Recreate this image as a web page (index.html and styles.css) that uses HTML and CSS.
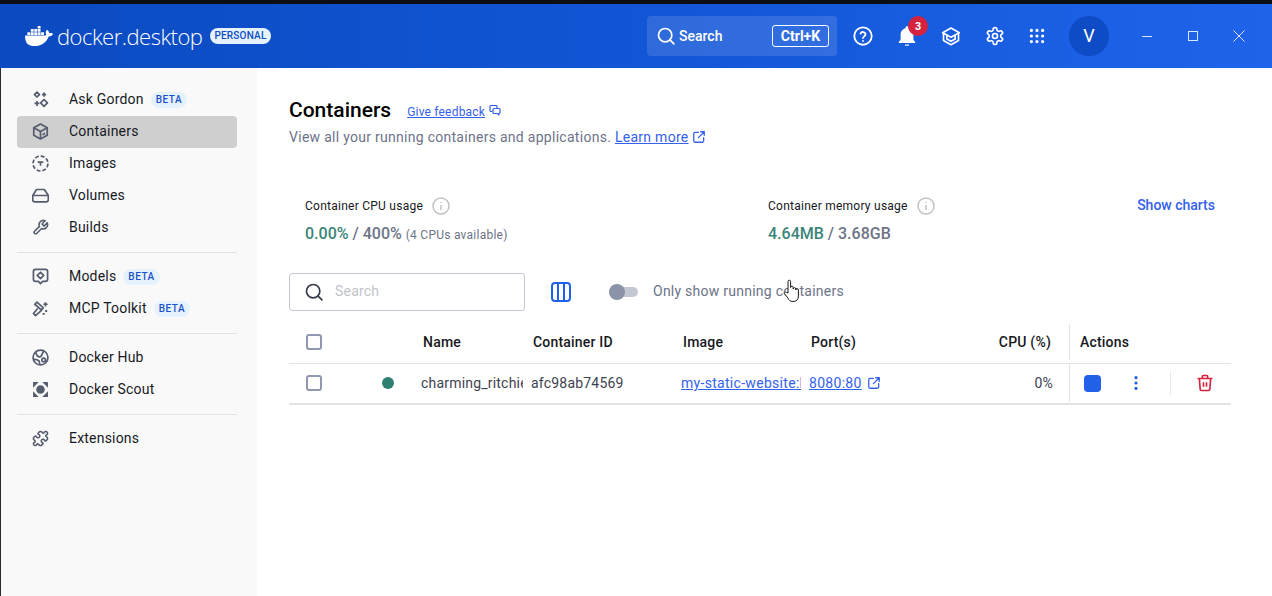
FILE: index.html
```html
<!DOCTYPE html>
<html lang="en">
<head>
    <meta charset="UTF-8">
    <title>Docker Desktop</title>
    <link rel="stylesheet" href="styles.css">
</head>
<body>
    <div class="window">
        <header class="topbar">
            <div class="brand">
                <svg class="whale" viewBox="0 0 24 24" fill="#fff"><path d="M13.983 11.078h2.119a.186.186 0 00.186-.185V9.006a.186.186 0 00-.186-.186h-2.119a.185.185 0 00-.185.185v1.888c0 .102.083.185.185.185m-2.954-5.43h2.118a.186.186 0 00.186-.186V3.574a.186.186 0 00-.186-.185h-2.118a.185.185 0 00-.185.185v1.888c0 .102.082.185.185.186m0 2.716h2.118a.187.187 0 00.186-.186V6.29a.186.186 0 00-.186-.185h-2.118a.185.185 0 00-.185.185v1.887c0 .102.082.185.185.186m-2.93 0h2.12a.186.186 0 00.184-.186V6.29a.185.185 0 00-.185-.185H8.1a.185.185 0 00-.185.185v1.887c0 .102.083.185.185.186m-2.964 0h2.119a.186.186 0 00.185-.186V6.29a.185.185 0 00-.185-.185H5.136a.186.186 0 00-.186.185v1.887c0 .102.084.185.186.186m5.893 2.715h2.118a.186.186 0 00.186-.185V9.006a.186.186 0 00-.186-.186h-2.118a.185.185 0 00-.185.185v1.888c0 .102.082.185.185.185m-2.93 0h2.12a.185.185 0 00.184-.185V9.006a.185.185 0 00-.184-.186h-2.12a.185.185 0 00-.184.185v1.888c0 .102.083.185.185.185m-2.964 0h2.119a.185.185 0 00.185-.185V9.006a.185.185 0 00-.184-.186h-2.12a.186.186 0 00-.186.186v1.887c0 .102.084.185.186.185m-2.92 0h2.12a.185.185 0 00.184-.185V9.006a.185.185 0 00-.184-.186h-2.12a.185.185 0 00-.184.185v1.888c0 .102.082.185.185.185M23.763 9.89c-.065-.051-.672-.51-1.954-.51-.338.001-.676.03-1.01.087-.248-1.7-1.653-2.53-1.716-2.566l-.344-.199-.226.327c-.284.438-.49.922-.612 1.43-.23.97-.09 1.882.403 2.661-.595.332-1.55.413-1.744.42H.751a.751.751 0 00-.75.748 11.376 11.376 0 00.692 4.062c.545 1.428 1.355 2.48 2.41 3.124 1.18.723 3.1 1.137 5.275 1.137.983.003 1.963-.086 2.93-.266a12.248 12.248 0 003.823-1.389c.98-.567 1.86-1.288 2.61-2.136 1.252-1.418 1.998-2.997 2.553-4.4h.221c1.372 0 2.215-.549 2.68-1.009.309-.293.55-.65.707-1.046l.098-.288Z"/></svg>
                <span class="wordmark">docker.desktop</span>
                <span class="plan">PERSONAL</span>
            </div>
            <div class="top-actions">
                <div class="top-search">
                    <svg class="ic-20" viewBox="0 0 24 24" fill="none" stroke="#fff" stroke-width="2" stroke-linecap="round"><circle cx="11" cy="11" r="8"/><path d="M17 17l4.5 4.5"/></svg>
                    <span class="top-search-label">Search</span>
                    <span class="kbd">Ctrl+K</span>
                </div>
                <button class="top-btn">
                    <svg class="ic-22" viewBox="0 0 24 24" fill="none" stroke="#fff" stroke-width="2" stroke-linecap="round"><circle cx="12" cy="12" r="9.5"/><path d="M9.3 9.4a2.8 2.8 0 0 1 5.4.9c0 1.8-2.7 2.3-2.7 4"/><path d="M12 17.3v.1"/></svg>
                </button>
                <button class="top-btn">
                    <svg class="ic-24" viewBox="0 0 24 24" fill="#fff"><path d="M12 2.200c-.8 0-1.400.6-1.400 1.400v.7C7.700 5 5.600 7.600 5.600 10.700v5.200L3.800 17.700v1.300h16.400v-1.300l-1.800-1.800v-5.200c0-3.100-2.100-5.700-5-6.400v-.7c0-.8-.6-1.400-1.400-1.400z"/><path d="M10 20.500h4v1.200h-4z"/></svg>
                    <span class="badge">3</span>
                </button>
                <button class="top-btn">
                    <svg class="ic-20" viewBox="0 0 24 24" fill="none" stroke="#fff" stroke-width="2" stroke-linejoin="round"><path d="M12 2.500L22 8l-10 5.500L2 8z"/><path d="M3 8.500v9l9 5 9-5v-9"/><path d="M7 11.500v4l5 2.800 5-2.800v-4"/></svg>
                </button>
                <button class="top-btn">
                    <svg class="ic-20" viewBox="0 0 24 24" fill="none" stroke="#fff" stroke-width="2" stroke-linejoin="round"><path d="M12.220 2h-.44a2 2 0 0 0-2 2v.18a2 2 0 0 1-1 1.730l-.43.25a2 2 0 0 1-2 0l-.15-.08a2 2 0 0 0-2.730.73l-.22.38a2 2 0 0 0 .73 2.730l.15.1a2 2 0 0 1 1 1.720v.51a2 2 0 0 1-1 1.740l-.15.09a2 2 0 0 0-.73 2.730l.22.38a2 2 0 0 0 2.730.73l.15-.08a2 2 0 0 1 2 0l.43.25a2 2 0 0 1 1 1.730V20a2 2 0 0 0 2 2h.44a2 2 0 0 0 2-2v-.18a2 2 0 0 1 1-1.730l.43-.25a2 2 0 0 1 2 0l.15.08a2 2 0 0 0 2.730-.73l.22-.39a2 2 0 0 0-.73-2.730l-.15-.08a2 2 0 0 1-1-1.740v-.5a2 2 0 0 1 1-1.740l.15-.09a2 2 0 0 0 .73-2.730l-.22-.38a2 2 0 0 0-2.730-.73l-.15.08a2 2 0 0 1-2 0l-.43-.25a2 2 0 0 1-1-1.730V4a2 2 0 0 0-2-2z"/><circle cx="12" cy="12" r="3"/></svg>
                </button>
                <button class="top-btn grid-btn">
                    <svg class="ic-16" viewBox="0 0 20 20" fill="#fff"><circle cx="3" cy="3" r="2"/><circle cx="10" cy="3" r="2"/><circle cx="17" cy="3" r="2"/><circle cx="3" cy="10" r="2"/><circle cx="10" cy="10" r="2"/><circle cx="17" cy="10" r="2"/><circle cx="3" cy="17" r="2"/><circle cx="10" cy="17" r="2"/><circle cx="17" cy="17" r="2"/></svg>
                </button>
                <div class="avatar">V</div>
                <div class="win-controls">
                    <svg class="win-ic" viewBox="0 0 12 12" stroke="#dbe6fb" fill="none"><path d="M1 6.500h10"/></svg>
                    <svg class="win-ic" viewBox="0 0 12 12" stroke="#dbe6fb" fill="none"><rect x="1.500" y="1.500" width="9" height="9"/></svg>
                    <svg class="win-ic" viewBox="0 0 12 12" stroke="#dbe6fb" fill="none"><path d="M.5.500l11 11M11.500.500l-11 11"/></svg>
                </div>
            </div>
        </header>

        <div class="body">
            <nav class="sidebar">
                <a class="nav-item">
                    <svg class="nav-ic" viewBox="0 0 24 24" fill="none" stroke="#555c6e" stroke-width="2.400" stroke-linejoin="round"><path d="M7 1.500l3.500 3.500L7 8.500 3.500 5z"/><path d="M17 12l4.800 4.800L17 21.600l-4.800-4.800z"/><path d="M17 2v6M14 5h6M7 14v7M3.500 17.500h7"/></svg>
                    <span>Ask Gordon</span><span class="beta">BETA</span>
                </a>
                <a class="nav-item active">
                    <svg class="nav-ic" viewBox="0 0 24 24" fill="none" stroke="#555c6e" stroke-width="2.400" stroke-linejoin="round"><path d="M12 1.500l9.500 5.200v10.600L12 22.500l-9.500-5.200V6.700z"/><path d="M2.500 6.700l9.500 5.300 9.500-5.300M12 12v10.500"/><path d="M15 16.500l3.500-2" /></svg>
                    <span>Containers</span>
                </a>
                <a class="nav-item">
                    <svg class="nav-ic" viewBox="0 0 24 24" fill="none" stroke="#555c6e" stroke-width="2.400"><circle cx="12" cy="12" r="10.500" stroke-dasharray="5.500 2.750"/><path d="M8 10h8M12 10v5"/></svg>
                    <span>Images</span>
                </a>
                <a class="nav-item">
                    <svg class="nav-ic" viewBox="0 0 24 24" fill="none" stroke="#555c6e" stroke-width="2.400" stroke-linejoin="round"><path d="M6.500 3.500h11L23 12v6a3 3 0 0 1-3 3H4a3 3 0 0 1-3-3v-6z"/><path d="M1 12h22M14 16.500h.1M18 16.500h.1"/></svg>
                    <span>Volumes</span>
                </a>
                <a class="nav-item">
                    <svg class="nav-ic" viewBox="0 0 24 24" fill="none" stroke="#555c6e" stroke-width="2.200" stroke-linejoin="round"><path d="M14.700 6.300a1 1 0 0 0 0 1.400l1.600 1.600a1 1 0 0 0 1.400 0l3.770-3.770a6 6 0 0 1-7.940 7.940l-6.910 6.910a2.120 2.120 0 0 1-3-3l6.910-6.910a6 6 0 0 1 7.940-7.940l-3.760 3.760z"/></svg>
                    <span>Builds</span>
                </a>
                <div class="nav-sep"></div>
                <a class="nav-item">
                    <svg class="nav-ic" viewBox="0 0 24 24" fill="none" stroke="#555c6e" stroke-width="2.400" stroke-linejoin="round"><path d="M5 2h14a3 3 0 0 1 3 3v11a3 3 0 0 1-3 3h-4l-3 3-3-3H5a3 3 0 0 1-3-3V5a3 3 0 0 1 3-3z"/><path d="M12 6l4.500 4.500L12 15l-4.500-4.500z"/></svg>
                    <span>Models</span><span class="beta">BETA</span>
                </a>
                <a class="nav-item">
                    <svg class="nav-ic" viewBox="0 0 24 24" fill="none" stroke="#555c6e" stroke-width="2.400" stroke-linejoin="round"><path d="M7 3l9 8-3 3-9-8z"/><path d="M14 14l-1 1-8 7-3-3 6-7"/><path d="M19 3v6M16 6h6M20 14v3M18.500 15.500h3M15 19.500h3"/></svg>
                    <span>MCP Toolkit</span><span class="beta">BETA</span>
                </a>
                <div class="nav-sep"></div>
                <a class="nav-item">
                    <svg class="nav-ic" viewBox="0 0 24 24" fill="none" stroke="#555c6e" stroke-width="2.400" stroke-linejoin="round"><circle cx="12" cy="12" r="10.500"/><path d="M5 4.500L7 9c2 2.500 4.500 2.500 6 1 1-2 1.500-4.500 4-7.500"/><path d="M2 15c3-1 6 .5 8 2l1 4"/><circle cx="16.500" cy="15.500" r="2.500"/></svg>
                    <span>Docker Hub</span>
                </a>
                <a class="nav-item">
                    <svg class="nav-ic" viewBox="0 0 24 24" fill="#555c6e"><circle cx="12" cy="12" r="6"/><path d="M1.500 1.500h8L1.500 9.500zM22.500 1.500h-8l8 8zM1.500 22.500h8l-8-8zM22.500 22.500h-8l8-8z"/></svg>
                    <span>Docker Scout</span>
                </a>
                <div class="nav-sep"></div>
                <a class="nav-item">
                    <svg class="nav-ic" viewBox="0 0 24 24" fill="none" stroke="#555c6e" stroke-width="2.200" stroke-linejoin="round"><path d="M19.439 7.850c-.049.322.059.648.289.878l1.568 1.568c.47.47.706 1.087.706 1.704s-.235 1.233-.706 1.704l-1.611 1.611a.98.98 0 0 1-.837.276c-.47-.07-.802-.48-.968-.925a2.501 2.501 0 1 0-3.214 3.214c.446.166.855.497.925.968a.979.979 0 0 1-.276.837l-1.61 1.61a2.404 2.404 0 0 1-1.705.707 2.402 2.402 0 0 1-1.704-.706l-1.568-1.568a1.026 1.026 0 0 0-.877-.29c-.493.074-.84.504-1.02.968a2.500 2.500 0 1 1-3.237-3.237c.464-.18.894-.527.967-1.02a1.026 1.026 0 0 0-.289-.877l-1.568-1.568A2.402 2.402 0 0 1 1.998 12c0-.617.236-1.234.706-1.704L4.230 8.770c.24-.24.581-.353.917-.303.515.077.877.528 1.073 1.010a2.500 2.500 0 1 0 3.259-3.259c-.482-.196-.933-.558-1.010-1.073-.05-.336.062-.676.303-.917l1.525-1.525A2.402 2.402 0 0 1 12 1.998c.617 0 1.234.236 1.704.706l1.568 1.568c.23.23.556.338.877.29.493-.074.84-.504 1.02-.968a2.500 2.500 0 1 1 3.237 3.237c-.464.18-.894.527-.967 1.020Z"/></svg>
                    <span>Extensions</span>
                </a>
            </nav>

            <main class="content">
                <div class="title-row">
                    <h1>Containers</h1>
                    <a class="feedback">Give feedback</a>
                    <svg class="ic-12" viewBox="0 0 24 24" fill="none" stroke="#3461ec" stroke-width="2.400" stroke-linejoin="round"><path d="M16 8V5a2 2 0 0 0-2-2H4a2 2 0 0 0-2 2v8a2 2 0 0 0 2 2h3"/><path d="M10 9h10a2 2 0 0 1 2 2v6a2 2 0 0 1-2 2v3l-3-3h-7a2 2 0 0 1-2-2v-6a2 2 0 0 1 2-2z"/></svg>
                </div>
                <p class="subtitle">View all your running containers and applications. <a class="link">Learn more</a>
                    <svg class="ic-14" viewBox="0 0 24 24" fill="none" stroke="#3461ec" stroke-width="2.200" stroke-linecap="round"><path d="M11 4H5a2 2 0 0 0-2 2v13a2 2 0 0 0 2 2h13a2 2 0 0 0 2-2v-6"/><path d="M15 3h6v6M21 3L11 13"/></svg>
                </p>

                <section class="stats">
                    <div class="stat stat-cpu">
                        <div class="stat-label">Container CPU usage
                            <svg class="info" viewBox="0 0 18 18" fill="none" stroke="#c2c2c2" stroke-width="1.500"><circle cx="9" cy="9" r="8"/><path d="M9 8v5M9 5v1"/></svg>
                        </div>
                        <div class="stat-value"><span class="teal">0.00%</span> / 400% <small>(4 CPUs available)</small></div>
                    </div>
                    <div class="stat stat-mem">
                        <div class="stat-label">Container memory usage
                            <svg class="info" viewBox="0 0 18 18" fill="none" stroke="#c2c2c2" stroke-width="1.500"><circle cx="9" cy="9" r="8"/><path d="M9 8v5M9 5v1"/></svg>
                        </div>
                        <div class="stat-value"><span class="teal">4.64MB</span> / 3.68GB</div>
                    </div>
                    <a class="show-charts">Show charts</a>
                </section>

                <div class="toolbar">
                    <div class="search-box">
                        <svg class="ic-20" viewBox="0 0 24 24" fill="none" stroke="#343a47" stroke-width="2" stroke-linecap="round"><circle cx="11" cy="11" r="8"/><path d="M17 17l4.500 4.500"/></svg>
                        <span class="placeholder">Search</span>
                    </div>
                    <svg class="columns-ic" viewBox="0 0 20 20" fill="none" stroke="#2160e8" stroke-width="2"><rect x="1" y="1" width="18" height="18" rx="3"/><path d="M7 1v18M13 1v18"/></svg>
                    <div class="toggle"><span class="toggle-thumb"></span></div>
                    <span class="toggle-label">Only show running containers</span>
                    <svg class="cursor" viewBox="0 0 18 24" fill="#fff" stroke="#1a1a1a" stroke-width="1" stroke-linejoin="round"><path d="M5 14V2.500a1.300 1.300 0 0 1 2.600 0V8.500a1.300 1.300 0 0 1 2.600 0V10a1.300 1.300 0 0 1 2.600 0v1a1.300 1.300 0 0 1 2.600 0v6c0 3.500-1.800 5.500-5.500 5.500-2.600 0-4-1.200-5-3.500L1.300 14.500c-.6-1.300 1.200-2.200 2.200-1z"/></svg>
                </div>

                <div class="table">
                    <div class="tr th">
                        <div class="td td-check"><span class="checkbox"></span></div>
                        <div class="td">Name</div>
                        <div class="td">Container ID</div>
                        <div class="td">Image</div>
                        <div class="td td-ports">
                            <span>Port(s)</span>
                            <span>CPU (%)</span>
                        </div>
                        <div class="td td-actions">Actions</div>
                    </div>
                    <div class="tr row">
                        <div class="td td-check"><span class="checkbox"></span><span class="dot"></span></div>
                        <div class="td clip">charming_ritchie</div>
                        <div class="td">afc98ab74569</div>
                        <div class="td clip"><a class="link">my-static-website:latest</a></div>
                        <div class="td td-ports">
                            <span><a class="link">8080:80</a>
                                <svg class="ic-14" viewBox="0 0 24 24" fill="none" stroke="#3461ec" stroke-width="2.200" stroke-linecap="round"><path d="M11 4H5a2 2 0 0 0-2 2v13a2 2 0 0 0 2 2h13a2 2 0 0 0 2-2v-6"/><path d="M15 3h6v6M21 3L11 13"/></svg>
                            </span>
                            <span>0%</span>
                        </div>
                        <div class="td td-actions">
                            <span class="stop"></span>
                            <svg class="kebab" viewBox="0 0 4 18" fill="#2160e8"><circle cx="2" cy="3" r="1.800"/><circle cx="2" cy="9" r="1.800"/><circle cx="2" cy="15" r="1.800"/></svg>
                            <span class="action-sep"></span>
                            <svg class="trash" viewBox="0 0 24 24" fill="none" stroke="#d5223f" stroke-width="2.200" stroke-linejoin="round"><path d="M2 6h20M8.500 6V3a1 1 0 0 1 1-1h5a1 1 0 0 1 1 1v3"/><path d="M4.500 6l1 14a2 2 0 0 0 2 2h9a2 2 0 0 0 2-2l1-14"/><path d="M10 11v6M14 11v6"/></svg>
                        </div>
                    </div>
                </div>
            </main>
        </div>
    </div>
</body>
</html>
```

FILE: styles.css
```css
* {
    box-sizing: border-box;
}
html, body {
    height: 100%;
}
body {
    margin: 0;
    background: #fff;
    font-family: Roboto, "Liberation Sans", sans-serif;
    color: #17191e;
    overflow: hidden;
}
a {
    cursor: pointer;
}
svg {
    display: block;
    flex: none;
}
.window {
    display: flex;
    flex-direction: column;
    height: 596px;
    border-top: 4px solid #0c0e14;
}

/* top bar */
.topbar {
    display: flex;
    align-items: center;
    justify-content: space-between;
    height: 64px;
    padding-left: 25px;
    background: linear-gradient(90deg, #0b4ac0 0%, #1256d6 50%, #1f63ea 100%);
    color: #fff;
}
.brand {
    display: flex;
    align-items: center;
}
.whale {
    width: 28px;
    height: 28px;
    margin-right: 4px;
}
.wordmark {
    font-family: "Open Sans", sans-serif;
    font-size: 22px;
    font-weight: 300;
    letter-spacing: -0.5px;
}
.plan {
    margin-left: 8px;
    padding: 0 4px;
    height: 16px;
    line-height: 16px;
    border-radius: 8px;
    background: #e5f2fc;
    color: #0d4cc4;
    font-size: 10px;
    font-weight: 500;
    letter-spacing: 0.2px;
}
.top-actions {
    display: flex;
    align-items: center;
}
.top-search {
    display: flex;
    align-items: center;
    width: 190px;
    height: 40px;
    margin-right: 4px;
    padding: 0 8px 0 9px;
    border-radius: 4px;
    background: rgba(255, 255, 255, 0.12);
}
.top-search-label {
    margin-left: 3px;
    font-size: 14px;
    font-weight: 500;
}
.kbd {
    margin-left: auto;
    width: 57px;
    height: 22px;
    line-height: 20px;
    text-align: center;
    border: 1px solid #fff;
    border-radius: 3px;
    font-size: 14px;
    font-weight: 700;
}
.top-btn {
    position: relative;
    display: flex;
    align-items: center;
    justify-content: center;
    width: 44px;
    height: 40px;
    padding: 0;
    border: none;
    background: none;
}
.grid-btn {
    width: 40px;
    margin-right: 2px;
}
.ic-12 {
    width: 12px;
    height: 12px;
}
.ic-14 {
    display: inline-block;
    width: 14px;
    height: 14px;
    vertical-align: -2px;
}
.ic-16 {
    width: 16px;
    height: 16px;
}
.ic-20 {
    width: 20px;
    height: 20px;
}
.ic-22 {
    width: 22px;
    height: 22px;
}
.ic-24 {
    width: 24px;
    height: 24px;
}
.badge {
    position: absolute;
    top: 0;
    left: 23px;
    width: 20px;
    height: 20px;
    line-height: 20px;
    text-align: center;
    border-radius: 50%;
    background: #d5223f;
    color: #fff;
    font-size: 11px;
    font-weight: 700;
}
.avatar {
    width: 40px;
    height: 40px;
    margin-left: 10px;
    line-height: 40px;
    text-align: center;
    border-radius: 50%;
    background: #0d4cc4;
    font-size: 18px;
}
.win-controls {
    display: flex;
    align-items: center;
    gap: 34px;
    margin-left: 32px;
    padding-right: 27px;
}
.win-ic {
    width: 12px;
    height: 12px;
}

/* layout */
.body {
    display: flex;
    flex: 1;
    min-height: 0;
}
.sidebar {
    width: 257px;
    padding: 16px 20px 0 17px;
    border-left: 1px solid #2a2c33;
    background: #f9f9fa;
}
.nav-item {
    display: flex;
    align-items: center;
    height: 32px;
    padding: 0 0 2px 15px;
    margin-left: -1px;
    border-radius: 4px;
    font-size: 14px;
    letter-spacing: 0.2px;
    color: #17191e;
}
.nav-item.active {
    background: #cfcfcf;
}
.nav-ic {
    width: 17px;
    height: 17px;
    margin-right: 20px;
}
.beta {
    height: 16px;
    margin: 2px 0 0 7px;
    padding: 0 5px;
    line-height: 16px;
    border-radius: 8px;
    background: #e5f2fc;
    color: #1c52c9;
    font-size: 10px;
    font-weight: 500;
    letter-spacing: 0.5px;
}
.nav-sep {
    height: 1px;
    margin: 8px 0 8px -1px;
    background: #e1e2e6;
}

/* main area */
.content {
    flex: 1;
    min-width: 0;
    padding: 28px 41px 0 32px;
}
.title-row {
    display: flex;
    align-items: center;
    height: 28px;
}
h1 {
    margin: 0 16px 0 0;
    font-size: 21px;
    font-weight: 500;
    color: #000;
}
.feedback {
    margin: 3px 4px 0 0;
    font-size: 12px;
    letter-spacing: 0.2px;
    color: #3461ec;
    text-decoration: underline;
}
.subtitle {
    margin: 3px 0 0;
    height: 20px;
    line-height: 20px;
    font-size: 14px;
    letter-spacing: 0.28px;
    color: #6c7388;
}
.link {
    color: #3461ec;
    text-decoration: underline;
}
.stats {
    display: flex;
    height: 63px;
    margin-top: 49px;
    padding: 0 16px;
}
.stat-cpu {
    width: 463px;
}
.stat-label {
    display: flex;
    align-items: center;
    gap: 9px;
    height: 20px;
    font-size: 12px;
    letter-spacing: 0.25px;
    color: #17191e;
}
.info {
    width: 18px;
    height: 18px;
}
.stat-value {
    margin-top: 8px;
    font-size: 16px;
    font-weight: 500;
    color: #6c7388;
}
.stat-value small {
    font-size: 12px;
    font-weight: 400;
    letter-spacing: 0.25px;
}
.teal {
    color: #3a8577;
}
.show-charts {
    margin-left: auto;
    line-height: 18px;
    font-size: 14px;
    font-weight: 500;
    color: #3461ec;
}
.toolbar {
    position: relative;
    display: flex;
    align-items: center;
    height: 38px;
    margin-top: 14px;
}
.search-box {
    display: flex;
    align-items: center;
    gap: 11px;
    width: 236px;
    height: 38px;
    padding-left: 14px;
    border: 1px solid #c4c8d3;
    border-radius: 3px;
}
.placeholder {
    padding-bottom: 2px;
    font-size: 14px;
    letter-spacing: 0.2px;
    color: #c2c4ca;
}
.columns-ic {
    width: 20px;
    height: 20px;
    margin-left: 26px;
}
.toggle {
    position: relative;
    width: 29px;
    height: 10px;
    margin-left: 38px;
    border-radius: 5px;
    background: #c4c8d3;
}
.toggle-thumb {
    position: absolute;
    top: -3px;
    left: 0;
    width: 16px;
    height: 16px;
    border-radius: 50%;
    background: #8a93a8;
}
.toggle-label {
    margin-left: 15px;
    padding-bottom: 2px;
    font-size: 14px;
    letter-spacing: 0.25px;
    color: #6c7388;
}
.cursor {
    position: absolute;
    left: 494px;
    top: 6px;
    width: 18px;
    height: 24px;
}

/* table */
.table {
    margin-top: 13px;
    font-size: 14px;
    letter-spacing: 0.2px;
}
.tr {
    display: grid;
    grid-template-columns: 132px 110px 150px 128px 260px 162px;
    align-items: stretch;
}
.th {
    height: 40px;
    padding-bottom: 3px;
    font-weight: 500;
    border-bottom: 1px solid #e1e2e6;
    color: #17191e;
}
.th .td {
    padding-left: 2px;
}
.row {
    height: 41px;
    padding-bottom: 1px;
    border-bottom: 2px solid #e1e2e6;
    color: #3d4250;
}
.td {
    display: flex;
    align-items: center;
    min-width: 0;
}
.clip {
    max-width: 102px;
    overflow: hidden;
    white-space: nowrap;
}
.row .clip:nth-child(4) {
    max-width: 120px;
}
.row .link {
    letter-spacing: 0.3px;
}
.th .td-check, .row .td-check {
    padding-left: 17px;
}
.checkbox {
    width: 16px;
    height: 16px;
    border: 2px solid #8f98b0;
    border-radius: 3px;
}
.dot {
    width: 12px;
    height: 12px;
    margin-left: 60px;
    border-radius: 50%;
    background: #2e8172;
}
.td-ports {
    justify-content: space-between;
    padding-right: 16px;
}
.th .td-ports {
    padding-right: 18px;
}
.td-ports .ic-14 {
    margin-left: 2px;
}
.td-actions {
    border-left: 1px solid #e1e2e6;
}
.th .td-actions {
    padding-left: 10px;
}
.row .td-actions {
    padding-left: 14px;
}
.stop {
    width: 17px;
    height: 17px;
    border-radius: 4px;
    background: #2160e8;
}
.kebab {
    width: 4px;
    height: 16px;
    margin-left: 33px;
}
.action-sep {
    width: 1px;
    height: 24px;
    margin-left: 32px;
    background: #e9eaed;
}
.trash {
    width: 18px;
    height: 18px;
    margin-left: 25px;
}
```
